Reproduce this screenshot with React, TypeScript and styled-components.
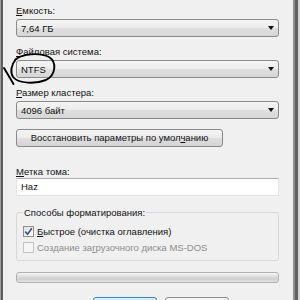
import React from 'react';
import styled, { createGlobalStyle } from 'styled-components';

const GlobalStyle = createGlobalStyle`
  html, body {
    margin: 0;
    padding: 0;
    background: #f0f0f0;
  }
  body {
    font-family: "Liberation Sans", Arial, sans-serif;
    font-size: 9.5px;
    color: #111;
  }
`;

const App = () => {
  return (
    <Window>
      <GlobalStyle />
      <LeftEdge />
      <Panel>
        <Label><Key>Е</Key>мкость:</Label>
        <Combo>
          <span>7,64 ГБ</span>
          <Arrow />
        </Combo>

        <Label $gap={8}><Key>Ф</Key>айловая система:</Label>
        <Combo>
          <span>NTFS</span>
          <Arrow />
        </Combo>

        <Label $gap={8}><Key>Р</Key>азмер кластера:</Label>
        <Combo>
          <span>4096 байт</span>
          <Arrow />
        </Combo>

        <ResetButton>Восстановить параметры по умол<Key>ч</Key>анию</ResetButton>

        <Label $gap={18}><Key>М</Key>етка тома:</Label>
        <TextInput>Haz</TextInput>

        <Group>
          <Legend>Способы форматирования:</Legend>
          <CheckRow>
            <CheckBox $checked>
              <svg width="9" height="9" viewBox="0 0 9 9">
                <path d="M1.3 4.6 L3.6 7.2 L7.8 1.2" fill="none" stroke="#3a4f8c" strokeWidth="1.6" />
              </svg>
            </CheckBox>
            <CheckText><Key>Б</Key>ыстрое (очистка оглавления)</CheckText>
          </CheckRow>
          <CheckRow>
            <CheckBox $disabled />
            <CheckText $disabled>Создание за<Key>г</Key>рузочного диска MS-DOS</CheckText>
          </CheckRow>
        </Group>

        <Progress />

        {/* only the top edge of the dialog buttons is in the picture */}
        <ButtonRow>
          <DialogButton $primary />
          <DialogButton />
        </ButtonRow>
      </Panel>
      <RightEdge />

      <Marker width="60" height="90" viewBox="0 0 60 90">
        <path
          d="M15 60 C 21 54, 39 52, 49 57 C 57 62, 56 75, 46 80 C 36 84, 19 84, 13 77 C 10 72, 11 65, 16 59"
          fill="none"
          stroke="#000"
          strokeWidth="1.9"
          strokeLinecap="round"
        />
        <path d="M4 68 L13.5 84" fill="none" stroke="#000" strokeWidth="1.9" strokeLinecap="round" />
      </Marker>
    </Window>
  );
};

const Window = styled.div`
  position: relative;
  display: flex;
  width: 300px;
  height: 300px;
  overflow: hidden;
  background: #f0f0f0;
`;

const LeftEdge = styled.div`
  width: 1px;
  border-right: 2px solid #5e5e5e;
  background: #9a9a9a;
`;

const RightEdge = styled.div`
  width: 3px;
  border-left: 2px solid #8e8e8e;
  border-right: 2px solid #d2d2d2;
  background: #626262;
`;

const Panel = styled.div`
  flex: 1;
  display: flex;
  flex-direction: column;
  padding: 4px 14px 0 13px;
  min-width: 0;

  & > * {
    flex-shrink: 0;
  }
`;

const Label = styled.div<{ $gap?: number }>`
  height: 13px;
  line-height: 13px;
  margin-top: ${(p) => p.$gap ?? 0}px;
  margin-bottom: 2px;
  white-space: nowrap;
`;

const Key = styled.span`
  text-decoration: underline;
`;

const Combo = styled.div`
  box-sizing: border-box;
  display: flex;
  align-items: center;
  justify-content: space-between;
  height: 18px;
  padding: 0 4px 0 4px;
  border: 1px solid #8a8a8a;
  border-radius: 3px;
  background: linear-gradient(#f4f4f4 0%, #ececec 48%, #dfdfdf 52%, #d6d6d6 100%);
`;

const Arrow = styled.span`
  width: 0;
  height: 0;
  border-left: 3px solid transparent;
  border-right: 3px solid transparent;
  border-top: 4px solid #111;
`;

const ResetButton = styled.div`
  box-sizing: border-box;
  width: 207px;
  height: 18px;
  margin-top: 10px;
  line-height: 16px;
  text-align: center;
  white-space: nowrap;
  border: 1px solid #8a8a8a;
  border-radius: 3px;
  background: linear-gradient(#f4f4f4 0%, #ececec 48%, #dfdfdf 52%, #d4d4d4 100%);
`;

const TextInput = styled.div`
  box-sizing: border-box;
  height: 18px;
  margin-top: -2px;
  padding-left: 4px;
  line-height: 16px;
  background: #fff;
  border: 1px solid #e2e3ea;
  border-top-color: #abadb3;
`;

const Group = styled.fieldset`
  margin: 10px 0 0 0;
  padding: 4px 6px 5px 6px;
  border: 1px solid #d5d9dc;
  border-radius: 3px;
`;

const Legend = styled.legend`
  padding: 0 1px;
  line-height: 13px;
`;

const CheckRow = styled.div`
  display: flex;
  align-items: center;
  height: 16px;
  gap: 3px;
`;

const CheckBox = styled.span<{ $checked?: boolean; $disabled?: boolean }>`
  box-sizing: border-box;
  display: flex;
  align-items: center;
  justify-content: center;
  width: 11px;
  height: 11px;
  border: 1px solid ${(p) => (p.$disabled ? '#c4c4c4' : '#8e8f8f')};
  background: ${(p) =>
    p.$disabled ? '#f4f4f4' : 'linear-gradient(135deg, #dcdfe6 0%, #f0f2f5 60%, #ffffff 100%)'};
`;

const CheckText = styled.span<{ $disabled?: boolean }>`
  white-space: nowrap;
  color: ${(p) => (p.$disabled ? '#8d8d8d' : '#111')};
`;

const Progress = styled.div`
  box-sizing: border-box;
  height: 11px;
  margin-top: 11px;
  border: 1px solid #b0b0b0;
  border-radius: 3px;
  background: linear-gradient(#f6f6f6 0%, #e0e0e0 35%, #cfcfcf 65%, #e4e4e4 100%);
`;

const ButtonRow = styled.div`
  display: flex;
  gap: 8px;
  margin-top: 14px;
  padding-left: 77px;
`;

const DialogButton = styled.div<{ $primary?: boolean }>`
  box-sizing: border-box;
  width: 64px;
  height: 22px;
  border-radius: 3px;
  border: 1px solid ${(p) => (p.$primary ? '#3c7fb1' : '#8a8a8a')};
  background: ${(p) =>
    p.$primary
      ? 'linear-gradient(#c9e9f8 0%, #b3def5 50%, #8fcdef 100%)'
      : 'linear-gradient(#f4f4f4 0%, #ececec 48%, #dfdfdf 52%, #d4d4d4 100%)'};
  box-shadow: ${(p) => (p.$primary ? 'inset 0 0 0 1px #e6f5fc' : 'inset 0 0 0 1px #fafafa')};
`;

const Marker = styled.svg`
  position: absolute;
  left: 0;
  top: 0;
  pointer-events: none;
`;

export default App;
